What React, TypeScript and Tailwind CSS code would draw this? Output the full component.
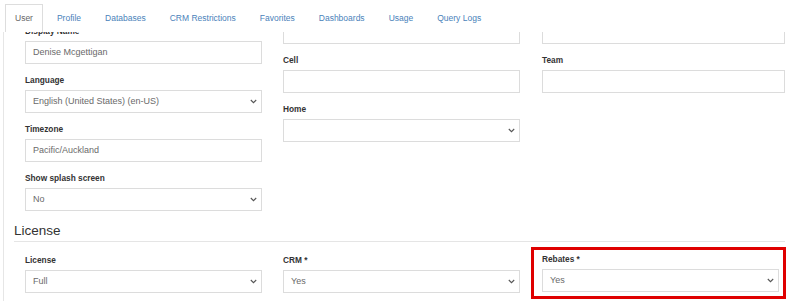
import React from "react";

const tabs = ["User", "Profile", "Databases", "CRM Restrictions", "Favorites", "Dashboards", "Usage", "Query Logs"];

function Chevron() {
  return (
    <svg width="7" height="5" viewBox="0 0 7 5" className="shrink-0">
      <polyline points="0.8,1 3.5,3.7 6.2,1" fill="none" stroke="#555" strokeWidth="1.1" />
    </svg>
  );
}

function Field({
  label,
  value = "",
  select = false,
  last = false,
  className = "",
}: {
  label: string;
  value?: string;
  select?: boolean;
  last?: boolean;
  className?: string;
}) {
  return (
    <div className={`${last ? "" : "mb-[9px]"} ${className}`}>
      <div className="mb-[3px] text-[8.3px] font-bold leading-[14px] text-[#333]">{label}</div>
      <div className="flex h-[23px] items-center justify-between border border-[#dcdcdc] bg-white pl-[7px] pr-[4px] text-[9px] text-[#6a6a6a]">
        <span>{value}</span>
        {select && <Chevron />}
      </div>
    </div>
  );
}

export default function App() {
  return (
    <div className="h-[301px] w-[790px] overflow-hidden bg-white font-['Liberation_Sans',Arial,sans-serif]">
      <ul className="flex h-[32px] pl-[5px] pt-[4px]">
        {tabs.map((t, i) => (
          <li
            key={t}
            className={`mr-[4px] flex items-center border border-b-0 px-[9px] text-[8.5px] ${
              i === 0 ? "border-[#dddddd] bg-white text-[#666]" : "border-transparent text-[#4a82ba]"
            }`}
          >
            {t}
          </li>
        ))}
      </ul>

      <div className="ml-[3px] h-[269px] overflow-hidden border-l border-[#e6e6e6]">
        <div className="-mt-[28px]">
          <div className="flex pl-[21px]">
            <div className="w-[237px] pt-[20px]">
              <Field label="Display Name" value="Denise Mcgettigan" />
              <Field label="Language" value="English (United States) (en-US)" select />
              <Field label="Timezone" value="Pacific/Auckland" />
              <Field label="Show splash screen" value="No" select />
            </div>
            <div className="ml-[21px] w-[237px]">
              <Field label="Phone" />
              <Field label="Cell" />
              <Field label="Home" select />
            </div>
            <div className="ml-[22px] w-[243px]">
              <Field label="Email" />
              <Field label="Team" />
            </div>
          </div>

          <div className="ml-[10px] w-[771px] border-b border-[#e5e5e5] text-[13.5px] leading-[21px] text-[#333]">
            License
          </div>

          <div className="mt-[11px] flex pl-[21px]">
            <Field label="License" value="Full" select last className="w-[237px]" />
            <Field label="CRM *" value="Yes" select last className="ml-[21px] w-[237px]" />
            <div className="-mt-[6px] ml-[11px] h-[52px] border-[3px] border-[#df0000] pb-[3px] pl-[8px] pr-[4px] pt-[2px]">
              <Field label="Rebates *" value="Yes" select last className="w-[237px]" />
            </div>
          </div>
        </div>
      </div>
    </div>
  );
}
